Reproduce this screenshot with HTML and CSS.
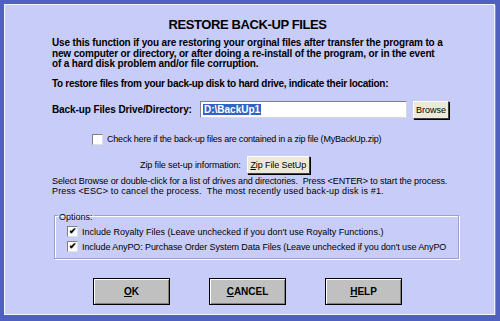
FILE: index.html
```html
<!DOCTYPE html>
<html lang="en">
<head>
  <meta charset="UTF-8" />
  <title>Restore Back-up Files</title>
  <link rel="stylesheet" href="styles.css">
</head>
<body>
  <div class="dialog">
    <h1>RESTORE BACK-UP FILES</h1>

    <p class="intro">Use this function if you are restoring your orginal files after transfer the program to a<br>new computer or directory, or after doing a re-install of the program, or in the event<br>of a hard disk problem and/or file corruption.</p>

    <p class="intro second">To restore files from your back-up disk to hard drive, indicate their location:</p>

    <div class="dir-row">
      <label for="dir">Back-up Files Drive/Directory:</label>
      <div class="dir-input" id="dir"><span class="sel">D:\BackUp1</span></div>
      <button class="small-btn browse">Browse</button>
    </div>

    <div class="zip-check">
      <span class="box"></span>
      <span>Check here if the back-up files are contained in a zip file (MyBackUp.zip)</span>
    </div>

    <div class="zip-row">
      <span>Zip file set-up information:</span>
      <button class="small-btn zip-btn"><u>Z</u>ip File SetUp</button>
    </div>

    <p class="help"><span class="l1">Select Browse or double-click for a list of drives and directories.&nbsp; Press &lt;ENTER&gt; to start the process.</span><br><span class="l2">Press &lt;ESC&gt; to cancel the process.&nbsp; The most recently used back-up disk is #1.</span></p>

    <fieldset class="options">
      <legend>Options:</legend>
      <div class="opt"><span class="box checked">&#10004;</span>Include Royalty Files (Leave unchecked if you don't use Royalty Functions.)</div>
      <div class="opt long"><span class="box checked">&#10004;</span>Include AnyPO: Purchase Order System Data Files (Leave unchecked if you don't use AnyPO</div>
    </fieldset>

    <div class="actions">
      <button class="big-btn"><u>O</u>K</button>
      <button class="big-btn"><u>C</u>ANCEL</button>
      <button class="big-btn"><u>H</u>ELP</button>
    </div>
  </div>
</body>
</html>
```

FILE: styles.css
```css
body {
  margin: 0;
  background-color: #5060c0;
  font-family: "Liberation Sans", Arial, sans-serif;
  color: #000;
}

.dialog {
  margin: 4px 5px 0 4px;
  height: 311px;
  background-color: #c8ccf8;
  border: 1px solid #f4f4fc;
  box-shadow: 1px 1px 0 #9090a0;
  box-sizing: border-box;
  padding: 12px 0 0 47px;
  white-space: nowrap;
}

h1 {
  font-size: 13px;
  line-height: 15px;
  letter-spacing: -0.4px;
  font-weight: bold;
  text-align: center;
  margin: 0 51px 6px 0;
}

.intro {
  font-size: 10px;
  letter-spacing: -0.15px;
  font-weight: bold;
  line-height: 10.5px;
  margin: 0;
}

.intro.second {
  letter-spacing: -0.3px;
  margin-top: 9.5px;
}

.dir-row {
  display: flex;
  align-items: center;
  margin-top: 11px;
}

.dir-row label {
  font-size: 10px;
  letter-spacing: -0.1px;
  font-weight: bold;
  width: 148px;
}

.dir-input {
  width: 207px;
  height: 17px;
  box-sizing: border-box;
  background: #fff;
  border: 1px solid #808080;
  border-right-color: #d8d8d8;
  border-bottom-color: #d8d8d8;
  padding: 1px 2px;
  font-size: 10px;
  font-weight: bold;
  line-height: 13px;
}

.sel {
  background: #3163c6;
  color: #fff;
  padding: 0 1px;
}

.small-btn {
  font-family: "Liberation Sans", Arial, sans-serif;
  font-size: 9px;
  background: #ece9d8;
  border: 1px solid #404040;
  border-top-color: #fff;
  border-left-color: #fff;
  box-shadow: 1px 1px 0 #000;
  height: 18px;
  padding: 0;
  margin-left: 6px;
}

.browse {
  width: 36px;
}

.zip-btn {
  width: 63px;
  letter-spacing: -0.1px;
}

.zip-check {
  display: flex;
  align-items: center;
  gap: 4px;
  font-size: 9px;
  letter-spacing: -0.2px;
  height: 11px;
  margin: 15px 0 0 40px;
}

.box {
  display: inline-block;
  width: 11px;
  height: 11px;
  background: #fff;
  border: 1px solid #808080;
  border-right-color: #e0e0e0;
  border-bottom-color: #e0e0e0;
  box-sizing: border-box;
  font-size: 9px;
  font-weight: bold;
  line-height: 9px;
  letter-spacing: 0;
  text-align: center;
}

.zip-row {
  display: flex;
  align-items: center;
  font-size: 9px;
  letter-spacing: -0.1px;
  height: 19px;
  margin: 11px 0 0 88px;
}

.help {
  font-size: 9px;
  line-height: 10px;
  margin: 1.5px 0 0 0;
}

.help .l1 {
  letter-spacing: -0.1px;
}

.help .l2 {
  letter-spacing: 0.15px;
}

.options {
  margin: 12px 0 0 2px;
  width: 399px;
  box-sizing: border-box;
  border: 1px solid #9ca0c8;
  box-shadow: 1px 1px 0 #fff, inset 1px 1px 0 #fff;
  padding: 2px 12px 4px;
  font-size: 9px;
}

.options legend {
  padding: 4px 1px 0;
  line-height: 10px;
  margin-left: -9px;
}

.opt {
  display: flex;
  align-items: center;
  gap: 4px;
  height: 15px;
}

.opt.long {
  letter-spacing: -0.1px;
}

.actions {
  display: flex;
  gap: 39px;
  margin: 19px 0 0 41px;
}

.big-btn {
  width: 77px;
  height: 27px;
  background: #c0c0c0;
  border: 1px solid #000;
  box-shadow: inset 1px 1px 0 #fff, inset -1px -1px 0 #808080;
  font-family: "Liberation Sans", Arial, sans-serif;
  font-size: 10px;
  font-weight: bold;
}
```
